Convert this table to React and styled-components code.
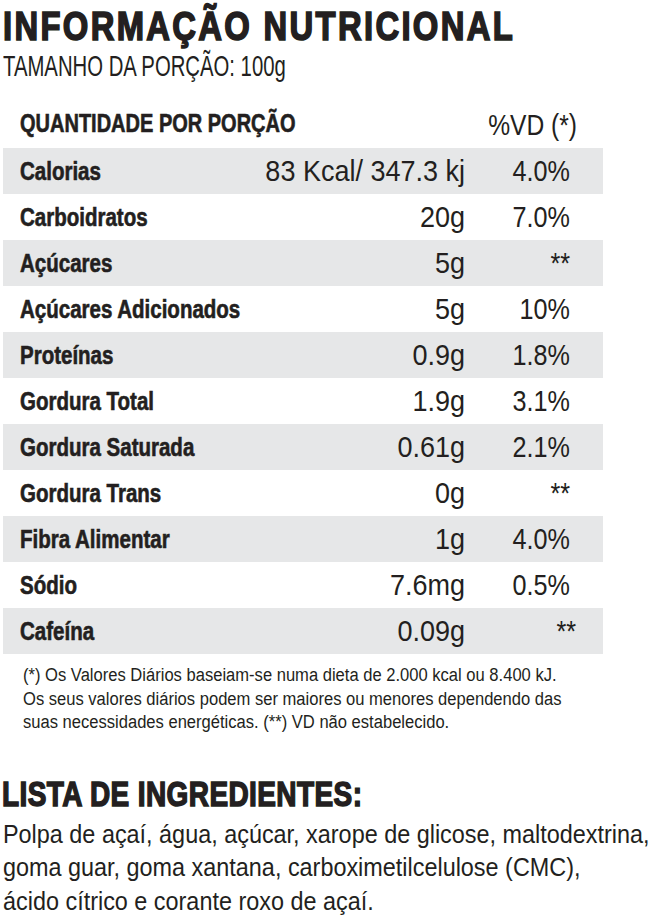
import React from 'react';
import styled, { createGlobalStyle } from 'styled-components';

const Global = createGlobalStyle`
  html, body { margin: 0; padding: 0; background: #ffffff; }
  body { font-family: "Liberation Sans", Arial, sans-serif; color: #231f20; }
`;

const INK = '#231f20';
const SHADE = '#e6e7e8';

const Page = styled.main`
  width: 654px;
  height: 919px;
  overflow: hidden;
  box-sizing: border-box;
  padding-top: 6px;
`;

const Title = styled.h1`
  margin: 0 0 0 3px;
  font-size: 41px;
  line-height: 41px;
  font-weight: 700;
  letter-spacing: 2.9px;
  white-space: nowrap;
  transform: scaleX(0.8);
  transform-origin: 0 0;
  -webkit-text-stroke: 1.7px ${INK};
`;

const Serving = styled.p`
  margin: 5px 0 0 3px;
  font-size: 29px;
  line-height: 29px;
  white-space: nowrap;
  transform: scaleX(0.7);
  transform-origin: 0 0;
`;

const Table = styled.section`
  margin: 27px 0 0 3px;
  width: 600px;
`;

const Grid = styled.div`
  display: grid;
  grid-template-columns: minmax(0, 1fr) 245px 105px;
  padding: 0 33px 0 17px;
  box-sizing: border-box;
`;

const HeaderRow = styled(Grid)`
  height: 40px;
  align-items: start;
`;

const HeadLabel = styled.div`
  font-size: 25px;
  line-height: 30px;
  font-weight: 700;
  white-space: nowrap;
  transform: scaleX(0.8);
  transform-origin: 0 50%;
  -webkit-text-stroke: 0.6px ${INK};
`;

const HeadVD = styled.div`
  grid-column: 3;
  font-size: 30px;
  line-height: 30px;
  margin-top: 2px;
  text-align: right;
  white-space: nowrap;
  margin-right: -7px;
  transform: scaleX(0.82);
  transform-origin: 100% 50%;
`;

const Row = styled(Grid)`
  height: 46px;
  align-items: center;
  background: ${p => (p.$shaded ? SHADE : 'transparent')};
`;

const Label = styled.div`
  font-size: 25px;
  line-height: 46px;
  font-weight: 700;
  white-space: nowrap;
  transform: scaleX(0.82);
  transform-origin: 0 50%;
  -webkit-text-stroke: 0.6px ${INK};
`;

const Amount = styled.div`
  font-size: 30px;
  line-height: 46px;
  text-align: right;
  white-space: nowrap;
  transform: scaleX(0.9);
  transform-origin: 100% 50%;
`;

const Daily = styled.div`
  font-size: 30px;
  line-height: 46px;
  text-align: right;
  white-space: nowrap;
  margin-right: ${p => (p.$nudge ? `-${p.$nudge}px` : '0')};
  transform: scaleX(0.84);
  transform-origin: 100% 50%;
`;

const Footnote = styled.div`
  margin: 10px 0 0 23px;
  font-size: 18px;
  line-height: 23.5px;
  white-space: nowrap;
  transform: scaleX(0.92);
  transform-origin: 0 0;
`;

const Line = styled.span`
  display: block;
`;

const SectionTitle = styled.h2`
  margin: 41px 0 0 2px;
  font-size: 35px;
  line-height: 35px;
  font-weight: 700;
  letter-spacing: 0.5px;
  white-space: nowrap;
  transform: scaleX(0.8);
  transform-origin: 0 0;
  -webkit-text-stroke: 1.5px ${INK};
`;

const Ingredients = styled.div`
  margin: 7px 0 0 3px;
  font-size: 26px;
  line-height: 33.5px;
  white-space: nowrap;
  transform: scaleX(0.9);
  transform-origin: 0 0;
`;

const rows = [
  { name: 'Calorias', amount: '83 Kcal/ 347.3 kj', vd: '4.0%' },
  { name: 'Carboidratos', amount: '20g', vd: '7.0%' },
  { name: 'Açúcares', amount: '5g', vd: '**' },
  { name: 'Açúcares Adicionados', amount: '5g', vd: '10%' },
  { name: 'Proteínas', amount: '0.9g', vd: '1.8%' },
  { name: 'Gordura Total', amount: '1.9g', vd: '3.1%' },
  { name: 'Gordura Saturada', amount: '0.61g', vd: '2.1%' },
  { name: 'Gordura Trans', amount: '0g', vd: '**' },
  { name: 'Fibra Alimentar', amount: '1g', vd: '4.0%' },
  { name: 'Sódio', amount: '7.6mg', vd: '0.5%' },
  { name: 'Cafeína', amount: '0.09g', vd: '**', nudge: 6 },
];

export default function App() {
  return (
    <Page>
      <Global />
      <Title>INFORMAÇÃO NUTRICIONAL</Title>
      <Serving>TAMANHO DA PORÇÃO: 100g</Serving>
      <Table>
        <HeaderRow>
          <HeadLabel>QUANTIDADE POR PORÇÃO</HeadLabel>
          <HeadVD>%VD (*)</HeadVD>
        </HeaderRow>
        {rows.map((r, i) => (
          <Row key={r.name} $shaded={i % 2 === 0}>
            <Label>{r.name}</Label>
            <Amount>{r.amount}</Amount>
            <Daily $nudge={r.nudge}>{r.vd}</Daily>
          </Row>
        ))}
      </Table>
      <Footnote>
        <Line>(*) Os Valores Diários baseiam-se numa dieta de 2.000 kcal ou 8.400 kJ.</Line>
        <Line>Os seus valores diários podem ser maiores ou menores dependendo das</Line>
        <Line>suas necessidades energéticas. (**) VD não estabelecido.</Line>
      </Footnote>
      <SectionTitle>LISTA DE INGREDIENTES:</SectionTitle>
      <Ingredients>
        <Line>Polpa de açaí, água, açúcar, xarope de glicose, maltodextrina,</Line>
        <Line>goma guar, goma xantana, carboximetilcelulose (CMC),</Line>
        <Line>ácido cítrico e corante roxo de açaí.</Line>
      </Ingredients>
    </Page>
  );
}
